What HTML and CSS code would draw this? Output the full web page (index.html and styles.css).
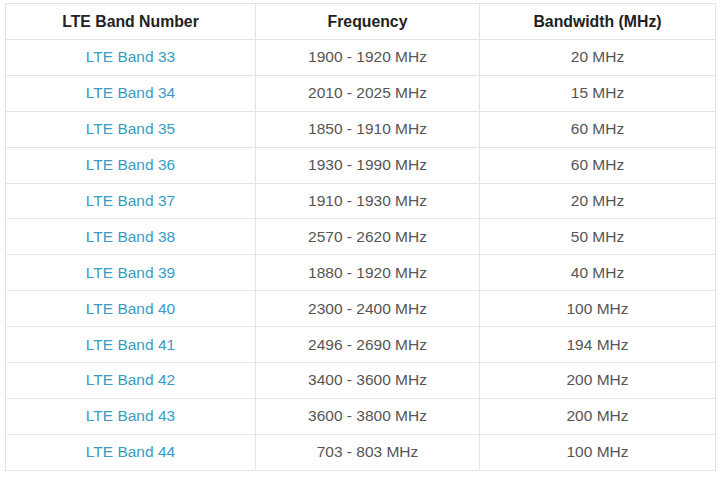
FILE: index.html
```html
<!DOCTYPE html>
<html lang="en">
<head>
<meta charset="utf-8">
<title>LTE Bands</title>
<link rel="stylesheet" href="styles.css">
</head>
<body>
<table class="bands">
  <colgroup>
    <col class="c1"><col class="c2"><col class="c3">
  </colgroup>
  <thead>
    <tr><th>LTE Band Number</th><th>Frequency</th><th>Bandwidth (MHz)</th></tr>
  </thead>
  <tbody>
    <tr><td><a href="#">LTE Band 33</a></td><td>1900 - 1920 MHz</td><td>20 MHz</td></tr>
    <tr><td><a href="#">LTE Band 34</a></td><td>2010 - 2025 MHz</td><td>15 MHz</td></tr>
    <tr><td><a href="#">LTE Band 35</a></td><td>1850 - 1910 MHz</td><td>60 MHz</td></tr>
    <tr><td><a href="#">LTE Band 36</a></td><td>1930 - 1990 MHz</td><td>60 MHz</td></tr>
    <tr><td><a href="#">LTE Band 37</a></td><td>1910 - 1930 MHz</td><td>20 MHz</td></tr>
    <tr><td><a href="#">LTE Band 38</a></td><td>2570 - 2620 MHz</td><td>50 MHz</td></tr>
    <tr><td><a href="#">LTE Band 39</a></td><td>1880 - 1920 MHz</td><td>40 MHz</td></tr>
    <tr><td><a href="#">LTE Band 40</a></td><td>2300 - 2400 MHz</td><td>100 MHz</td></tr>
    <tr><td><a href="#">LTE Band 41</a></td><td>2496 - 2690 MHz</td><td>194 MHz</td></tr>
    <tr><td><a href="#">LTE Band 42</a></td><td>3400 - 3600 MHz</td><td>200 MHz</td></tr>
    <tr><td><a href="#">LTE Band 43</a></td><td>3600 - 3800 MHz</td><td>200 MHz</td></tr>
    <tr><td><a href="#">LTE Band 44</a></td><td>703 - 803 MHz</td><td>100 MHz</td></tr>
  </tbody>
</table>
</body>
</html>
```

FILE: styles.css
```css
html, body {
  margin: 0;
  padding: 0;
  background: #ffffff;
}

body {
  padding: 3px 0 0 5px;
  font-family: "Liberation Sans", Arial, sans-serif;
}

.bands {
  border-collapse: collapse;
  width: 710px;
  table-layout: fixed;
}

.c1 { width: 250px; }
.c2 { width: 224px; }
.c3 { width: 236px; }

.bands th,
.bands td {
  border: 1px solid #e4e4e4;
  text-align: center;
  padding: 0;
  box-sizing: border-box;
}

.bands th {
  height: 36px;
  font-size: 15.8px;
  font-weight: bold;
  color: #222222;
}

.bands td {
  height: 35.9px;
  font-size: 15.5px;
  color: #555555;
}

.bands a {
  color: #3a9bc1;
  text-decoration: none;
}
```
